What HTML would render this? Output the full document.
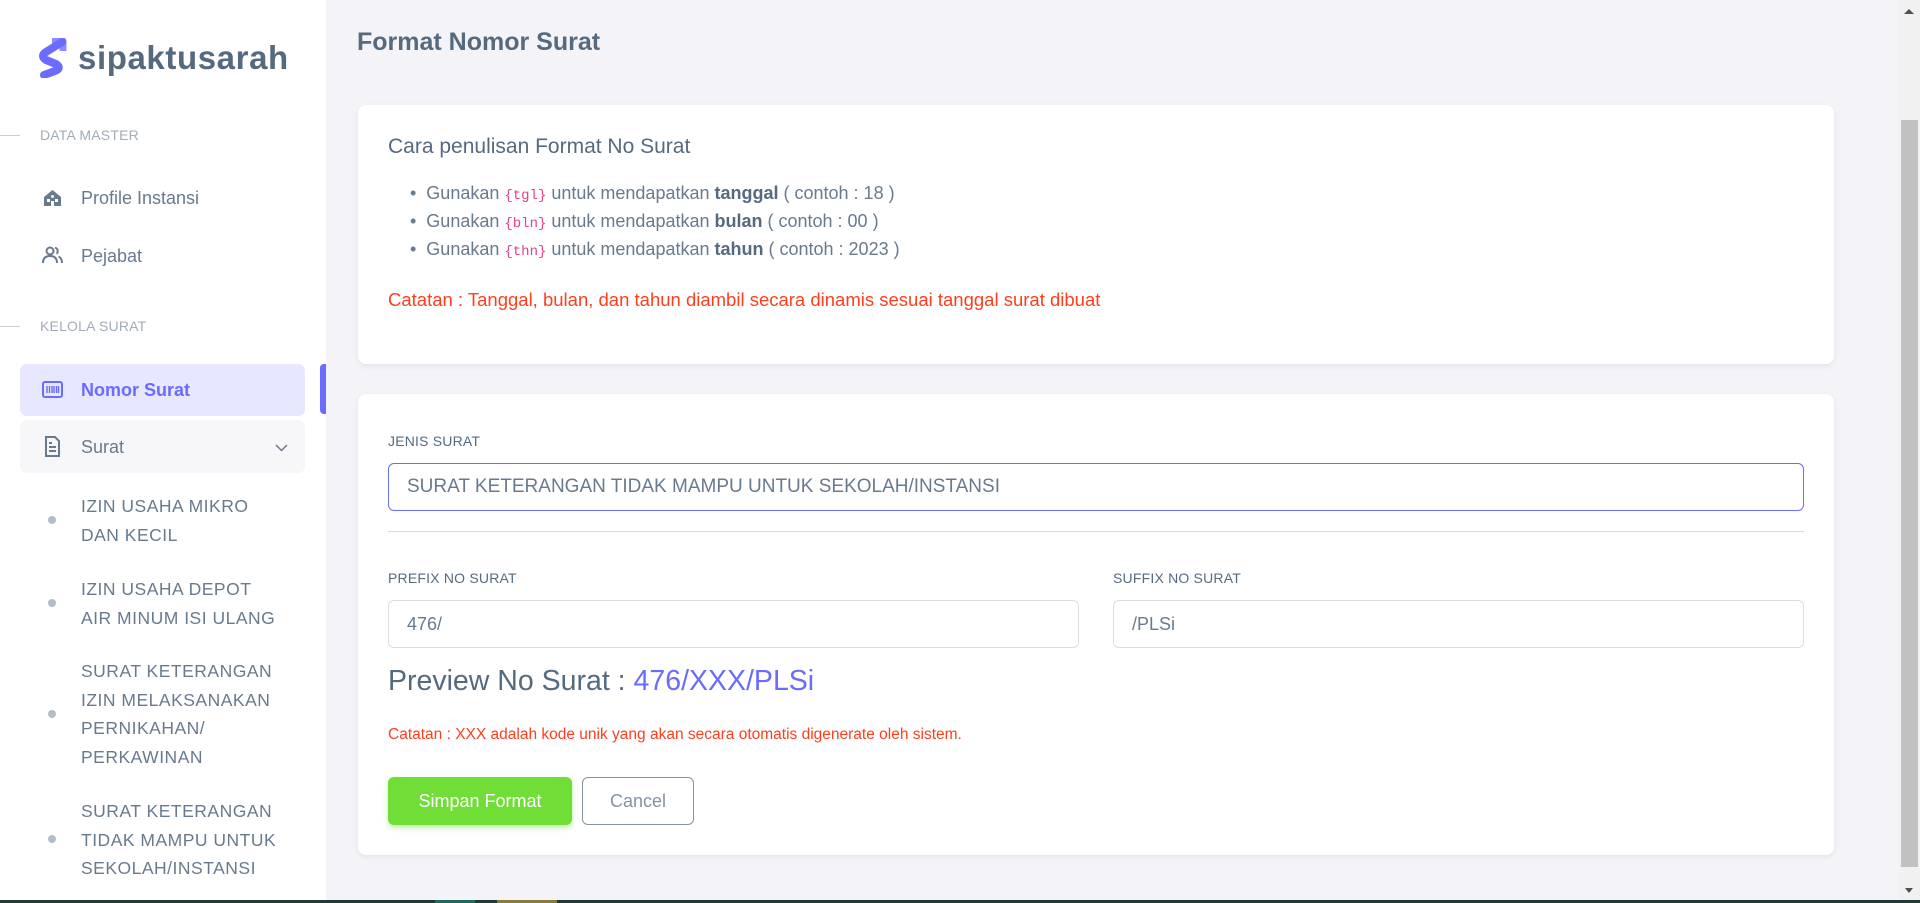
<!DOCTYPE html>
<html><head><meta charset="utf-8"><style>
*{box-sizing:border-box;margin:0;padding:0}
body{width:1920px;height:903px;overflow:hidden;background:#f4f4f8;font-family:"Liberation Sans",sans-serif;color:#697a8d;position:relative}
.abs{position:absolute}
.side{left:0;top:0;width:326px;height:900px;background:#fff}
.logo{left:78px;top:39px;font-size:33px;font-weight:bold;color:#566a7f;letter-spacing:0.6px}
.hdr{font-size:14px;color:#a1acb8;letter-spacing:0.2px}
.hline{left:0;width:20px;height:1px;background:#c9ced6}
.item{font-size:18px;color:#697a8d;line-height:22px}
.sub{left:81px;font-size:17.5px;line-height:28.6px;color:#697a8d;letter-spacing:0.5px}
.dot{left:48px;width:8px;height:8px;border-radius:50%;background:#b4bdc6}
.card{background:#fff;border-radius:8px;box-shadow:0 2px 6px rgba(67,89,113,.10)}
.lbl{font-size:14px;color:#566a7f;letter-spacing:.2px}
.inp{border:1px solid #d9dee3;border-radius:6px;height:48px;font-size:18px;color:#697a8d;padding-left:18px;line-height:46px;background:#fff}
code{font-family:"Liberation Mono",monospace;color:#e83e8c;font-size:14px;line-height:1}
.bl div{height:28px;line-height:28px;white-space:nowrap}
</style></head><body>
<div class="abs side"></div>
<svg class="abs" style="left:38px;top:38px" width="30" height="40" viewBox="0 0 30 40">
<path d="M14 3 L25 3 L25 13" fill="none" stroke="#8b8dff" stroke-width="7" stroke-linejoin="round"/>
<path d="M24 4 L8 14 Q2 18 8 22 L18 26 Q24 30 17 33 L6 37" fill="none" stroke="#696cff" stroke-width="8" stroke-linecap="round" stroke-linejoin="round"/>
</svg>
<div class="abs logo">sipaktusarah</div>

<div class="abs hline" style="top:135px"></div>
<div class="abs hdr" style="left:40px;top:127px">DATA MASTER</div>
<svg class="abs" style="left:42px;top:188px" width="21" height="20" viewBox="0 0 21 20"><path d="M2 9 L10.5 2 L19 9 V18 H2 Z" fill="#697a8d"/><rect x="5" y="11" width="3" height="3" fill="#fff"/><rect x="13" y="11" width="3" height="3" fill="#fff"/><rect x="9" y="7" width="3" height="3" rx="1.5" fill="#fff"/><rect x="9" y="13" width="3" height="5" fill="#fff"/></svg>
<div class="abs item" style="left:81px;top:187px">Profile Instansi</div>
<svg class="abs" style="left:42px;top:245px" width="21" height="20" viewBox="0 0 21 20" fill="none" stroke="#697a8d" stroke-width="2"><circle cx="8" cy="6" r="3.5"/><path d="M1 18 Q1 11 8 11 Q15 11 15 18"/><path d="M13 2.5 Q17 4 15 9 M16.5 11.5 Q20 13 20 18"/></svg>
<div class="abs item" style="left:81px;top:245px">Pejabat</div>

<div class="abs hline" style="top:326px"></div>
<div class="abs hdr" style="left:40px;top:318px">KELOLA SURAT</div>

<div class="abs" style="left:20px;top:364px;width:285px;height:52px;background:#e7e7ff;border-radius:7px"></div>
<svg class="abs" style="left:42px;top:381px" width="21" height="17" viewBox="0 0 21 17"><rect x="1" y="1" width="19" height="15" rx="2" fill="none" stroke="#696cff" stroke-width="2"/><path d="M5 5v7M7.5 5v7M10 5v7M12 5v7M14.5 5v7M16.5 5v7" stroke="#696cff" stroke-width="1.4"/></svg>
<div class="abs item" style="left:81px;top:379px;color:#696cff;font-weight:bold">Nomor Surat</div>
<div class="abs" style="left:320px;top:364px;width:6px;height:50px;background:#696cff;border-radius:4px 0 0 4px"></div>

<div class="abs" style="left:20px;top:420px;width:285px;height:53px;background:#f7f7f9;border-radius:7px"></div>
<svg class="abs" style="left:44px;top:436px" width="17" height="21" viewBox="0 0 17 21" fill="none" stroke="#697a8d" stroke-width="2"><path d="M2 1 H11 L15 5 V20 H2 Z"/><path d="M5 11 H12 M5 15 H12 M5 7 H8"/></svg>
<div class="abs item" style="left:81px;top:436px">Surat</div>
<svg class="abs" style="left:275px;top:444px" width="13" height="8" viewBox="0 0 13 8"><path d="M1 1 L6.5 6.5 L12 1" fill="none" stroke="#697a8d" stroke-width="1.5"/></svg>

<div class="abs dot" style="top:516px"></div>
<div class="abs sub" style="top:492px">IZIN USAHA MIKRO<br>DAN KECIL</div>
<div class="abs dot" style="top:599px"></div>
<div class="abs sub" style="top:575px">IZIN USAHA DEPOT<br>AIR MINUM ISI ULANG</div>
<div class="abs dot" style="top:710px"></div>
<div class="abs sub" style="top:657px">SURAT KETERANGAN<br>IZIN MELAKSANAKAN<br>PERNIKAHAN/<br>PERKAWINAN</div>
<div class="abs dot" style="top:835px"></div>
<div class="abs sub" style="top:797px">SURAT KETERANGAN<br>TIDAK MAMPU UNTUK<br>SEKOLAH/INSTANSI</div>

<div class="abs" style="left:357px;top:28px;font-size:25px;font-weight:bold;color:#566a7f">Format Nomor Surat</div>

<div class="abs card" style="left:358px;top:105px;width:1476px;height:259px"></div>
<div class="abs" style="left:388px;top:135px;font-size:21px;color:#566a7f">Cara penulisan Format No Surat</div>
<div class="abs bl" style="left:410px;top:179px;font-size:18px;color:#697a8d">
<div>•&nbsp; Gunakan <code>{tgl}</code> untuk mendapatkan <b style="color:#566a7f">tanggal</b> ( contoh : 18 )</div>
<div>•&nbsp; Gunakan <code>{bln}</code> untuk mendapatkan <b style="color:#566a7f">bulan</b> ( contoh : 00 )</div>
<div>•&nbsp; Gunakan <code>{thn}</code> untuk mendapatkan <b style="color:#566a7f">tahun</b> ( contoh : 2023 )</div>
</div>
<div class="abs" style="left:388px;top:289px;font-size:18.5px;color:#ff3e1d">Catatan : Tanggal, bulan, dan tahun diambil secara dinamis sesuai tanggal surat dibuat</div>

<div class="abs card" style="left:358px;top:394px;width:1476px;height:461px"></div>
<div class="abs lbl" style="left:388px;top:433px">JENIS SURAT</div>
<div class="abs inp" style="left:388px;top:463px;width:1416px;border-color:#696cff;font-size:19px">SURAT KETERANGAN TIDAK MAMPU UNTUK SEKOLAH/INSTANSI</div>
<div class="abs" style="left:388px;top:531px;width:1416px;height:1px;background:#d9dee3"></div>
<div class="abs lbl" style="left:388px;top:570px">PREFIX NO SURAT</div>
<div class="abs inp" style="left:388px;top:600px;width:691px">476/</div>
<div class="abs lbl" style="left:1113px;top:570px">SUFFIX NO SURAT</div>
<div class="abs inp" style="left:1113px;top:600px;width:691px">/PLSi</div>
<div class="abs" style="left:388px;top:665px;font-size:28.5px;color:#566a7f">Preview No Surat : <span style="color:#696cff">476/XXX/PLSi</span></div>
<div class="abs" style="left:388px;top:726px;font-size:15.5px;color:#ff3e1d">Catatan : XXX adalah kode unik yang akan secara otomatis digenerate oleh sistem.</div>
<div class="abs" style="left:388px;top:777px;width:184px;height:48px;background:#71dd37;border-radius:6px;color:#fff;font-size:18px;text-align:center;line-height:48px;box-shadow:0 3px 6px rgba(113,221,55,.4)">Simpan Format</div>
<div class="abs" style="left:582px;top:777px;width:112px;height:48px;border:1px solid #8592a3;border-radius:6px;color:#8592a3;font-size:18px;text-align:center;line-height:46px">Cancel</div>

<div class="abs" style="left:1899px;top:0;width:21px;height:900px;background:#f1f1f1"></div>
<div class="abs" style="left:1901px;top:120px;width:17px;height:747px;background:#c1c1c1"></div>
<div class="abs" style="left:1904px;top:9px;width:0;height:0;border-left:5px solid transparent;border-right:5px solid transparent;border-bottom:5px solid #505050"></div>
<div class="abs" style="left:1905px;top:888px;width:0;height:0;border-left:4px solid transparent;border-right:4px solid transparent;border-top:5px solid #505050"></div>
<div class="abs" style="left:0;top:900px;width:1920px;height:3px;background:#1f3b38"></div>
<div class="abs" style="left:435px;top:900px;width:40px;height:3px;background:#1e6b5e"></div>
<div class="abs" style="left:497px;top:900px;width:60px;height:3px;background:#8a7a3a"></div>
</body></html>
